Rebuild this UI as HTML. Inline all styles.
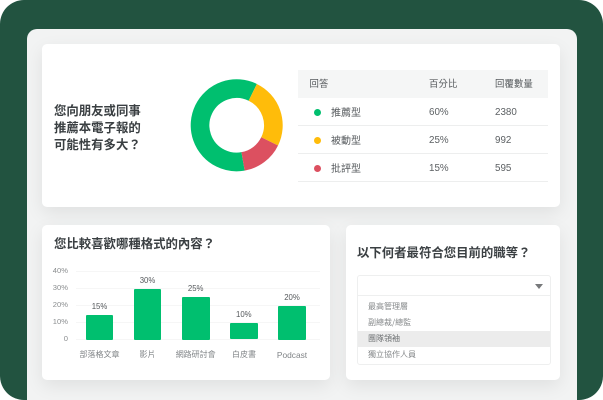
<!DOCTYPE html>
<html lang="zh-Hant">
<head>
<meta charset="utf-8">
<style>
html,body{margin:0;padding:0;background:#fff}
#p{position:relative;width:603px;height:400px;overflow:hidden;background:#fff;font-family:"Liberation Sans","Noto Sans CJK TC",sans-serif;filter:blur(.3px)}
#g{position:absolute;left:0;top:0;width:603px;height:400px;background:#225340;border-radius:24px}
#i{position:absolute;left:27px;top:29px;width:550px;height:371px;background:#f2f3f3;border-radius:10px 10px 0 0}
.c{position:absolute;background:#fff;border-radius:5px;box-shadow:0 6px 18px rgba(0,0,0,.08)}
.t{position:absolute;white-space:nowrap;line-height:1}
.h{font-family:"Noto Sans CJK TC",sans-serif;font-weight:700;font-size:12.4px;color:#3a3f42}
.th{font-family:"Noto Sans CJK TC",sans-serif;font-size:9.4px;color:#55595c;letter-spacing:.1px}
.td{font-family:"Noto Sans CJK TC",sans-serif;font-size:10px;color:#55595c}
.n{font-size:9.8px;color:#5c6063}
.d{position:absolute;width:7px;height:7px;border-radius:50%;left:314px}
.l{position:absolute;left:298px;width:250px;height:1px;background:#edeeee}
.ax{font-size:7.6px;color:#8a8d8f;text-align:right;width:30px;left:38px}
.gl{position:absolute;left:76px;width:244px;height:1px;background:#f6f6f6}
.b{position:absolute;background:#00bf6f;width:27.5px;border-radius:1px}
.v{font-size:7.8px;color:#55595c;text-align:center;width:40px}
.x{font-family:"Noto Sans CJK TC",sans-serif;font-size:8px;color:#808487;text-align:center;width:60px}
.o{font-family:"Noto Sans CJK TC",sans-serif;font-size:8px;color:#85888a;left:368px}
</style>
</head>
<body>
<div id="p">
<div id="g"></div>
<div id="i"></div>
<div class="c" style="left:42px;top:44px;width:518px;height:163px"></div>
<div class="c" style="left:42px;top:225px;width:288px;height:155px"></div>
<div class="c" style="left:346px;top:225px;width:214px;height:155px"></div>

<div class="t h" style="left:54px;top:103.5px">您向朋友或同事</div>
<div class="t h" style="left:54px;top:120.5px">推薦本電子報的</div>
<div class="t h" style="left:54px;top:137.5px">可能性有多大？</div>

<svg style="position:absolute;left:190px;top:79px" width="94" height="94" viewBox="0 0 94 94">
<g transform="rotate(-64 46.7 46.3)" fill="none" stroke-width="18.7">
<circle cx="46.7" cy="46.3" r="36.65" stroke="#00bf6f" pathLength="360" stroke-dasharray="216 144" stroke-dashoffset="-144"/>
<circle cx="46.7" cy="46.3" r="36.65" stroke="#ffbc0a" pathLength="360" stroke-dasharray="90 270"/>
<circle cx="46.7" cy="46.3" r="36.65" stroke="#dc5060" pathLength="360" stroke-dasharray="54 306" stroke-dashoffset="-90"/>
</g>
</svg>

<div style="position:absolute;left:298px;top:70px;width:250px;height:28px;background:#f5f6f6"></div>
<div class="t th" style="left:309.5px;top:79px">回答</div>
<div class="t th" style="left:429px;top:79px">百分比</div>
<div class="t th" style="left:495px;top:79px">回覆數量</div>

<div class="l" style="top:125px"></div>
<div class="l" style="top:153px"></div>
<div class="l" style="top:181px"></div>

<div class="d" style="top:108.5px;background:#00bf6f"></div>
<div class="d" style="top:136.5px;background:#ffbc0a"></div>
<div class="d" style="top:164.5px;background:#dc5060"></div>

<div class="t td" style="left:331px;top:107px">推薦型</div>
<div class="t td" style="left:331px;top:135px">被動型</div>
<div class="t td" style="left:331px;top:163px">批評型</div>
<div class="t n" style="left:429px;top:107.5px">60%</div>
<div class="t n" style="left:429px;top:135.5px">25%</div>
<div class="t n" style="left:429px;top:163.5px">15%</div>
<div class="t n" style="left:495px;top:107.5px">2380</div>
<div class="t n" style="left:495px;top:135.5px">992</div>
<div class="t n" style="left:495px;top:163.5px">595</div>

<div class="t h" style="left:54px;top:237px">您比較喜歡哪種格式的內容？</div>

<div class="gl" style="top:271px"></div>
<div class="gl" style="top:288px"></div>
<div class="gl" style="top:305px"></div>
<div class="gl" style="top:322px"></div>
<div class="gl" style="top:339px"></div>
<div class="t ax" style="top:267px">40%</div>
<div class="t ax" style="top:284px">30%</div>
<div class="t ax" style="top:301px">20%</div>
<div class="t ax" style="top:318px">10%</div>
<div class="t ax" style="top:335px">0</div>

<div class="b" style="left:85.7px;top:314.5px;height:25px"></div>
<div class="b" style="left:133.8px;top:289px;height:50.5px"></div>
<div class="b" style="left:182px;top:297px;height:42.5px"></div>
<div class="b" style="left:230px;top:322.8px;height:16.7px"></div>
<div class="b" style="left:278.2px;top:305.5px;height:34px"></div>

<div class="t v" style="left:79.5px;top:302.5px">15%</div>
<div class="t v" style="left:127.5px;top:276.5px">30%</div>
<div class="t v" style="left:175.7px;top:284.5px">25%</div>
<div class="t v" style="left:223.8px;top:310.5px">10%</div>
<div class="t v" style="left:272px;top:293.5px">20%</div>

<div class="t x" style="left:69.5px;top:351px">部落格文章</div>
<div class="t x" style="left:117.5px;top:351px">影片</div>
<div class="t x" style="left:165.7px;top:351px">網路研討會</div>
<div class="t x" style="left:214px;top:351px">白皮書</div>
<div class="t x" style="left:262px;top:351px;font-family:'Liberation Sans',sans-serif;font-size:8.4px">Podcast</div>

<div class="t h" style="left:357px;top:245.5px">以下何者最符合您目前的職等？</div>

<div style="position:absolute;left:357px;top:275px;width:192px;height:88px;border:1px solid #eeefef;border-radius:3px"></div>
<div style="position:absolute;left:358px;top:295px;width:192px;height:1px;background:#eeefef"></div>
<div style="position:absolute;left:534.5px;top:283.5px;width:0;height:0;border-left:4px solid transparent;border-right:4px solid transparent;border-top:5px solid #77797b"></div>
<div style="position:absolute;left:358px;top:331px;width:192px;height:16px;background:#ececec"></div>
<div class="t o" style="top:302.5px">最高管理層</div>
<div class="t o" style="top:319px">副總裁/總監</div>
<div class="t o" style="top:335px;color:#6d7072">團隊領袖</div>
<div class="t o" style="top:351px">獨立協作人員</div>
</div>
</body>
</html>
